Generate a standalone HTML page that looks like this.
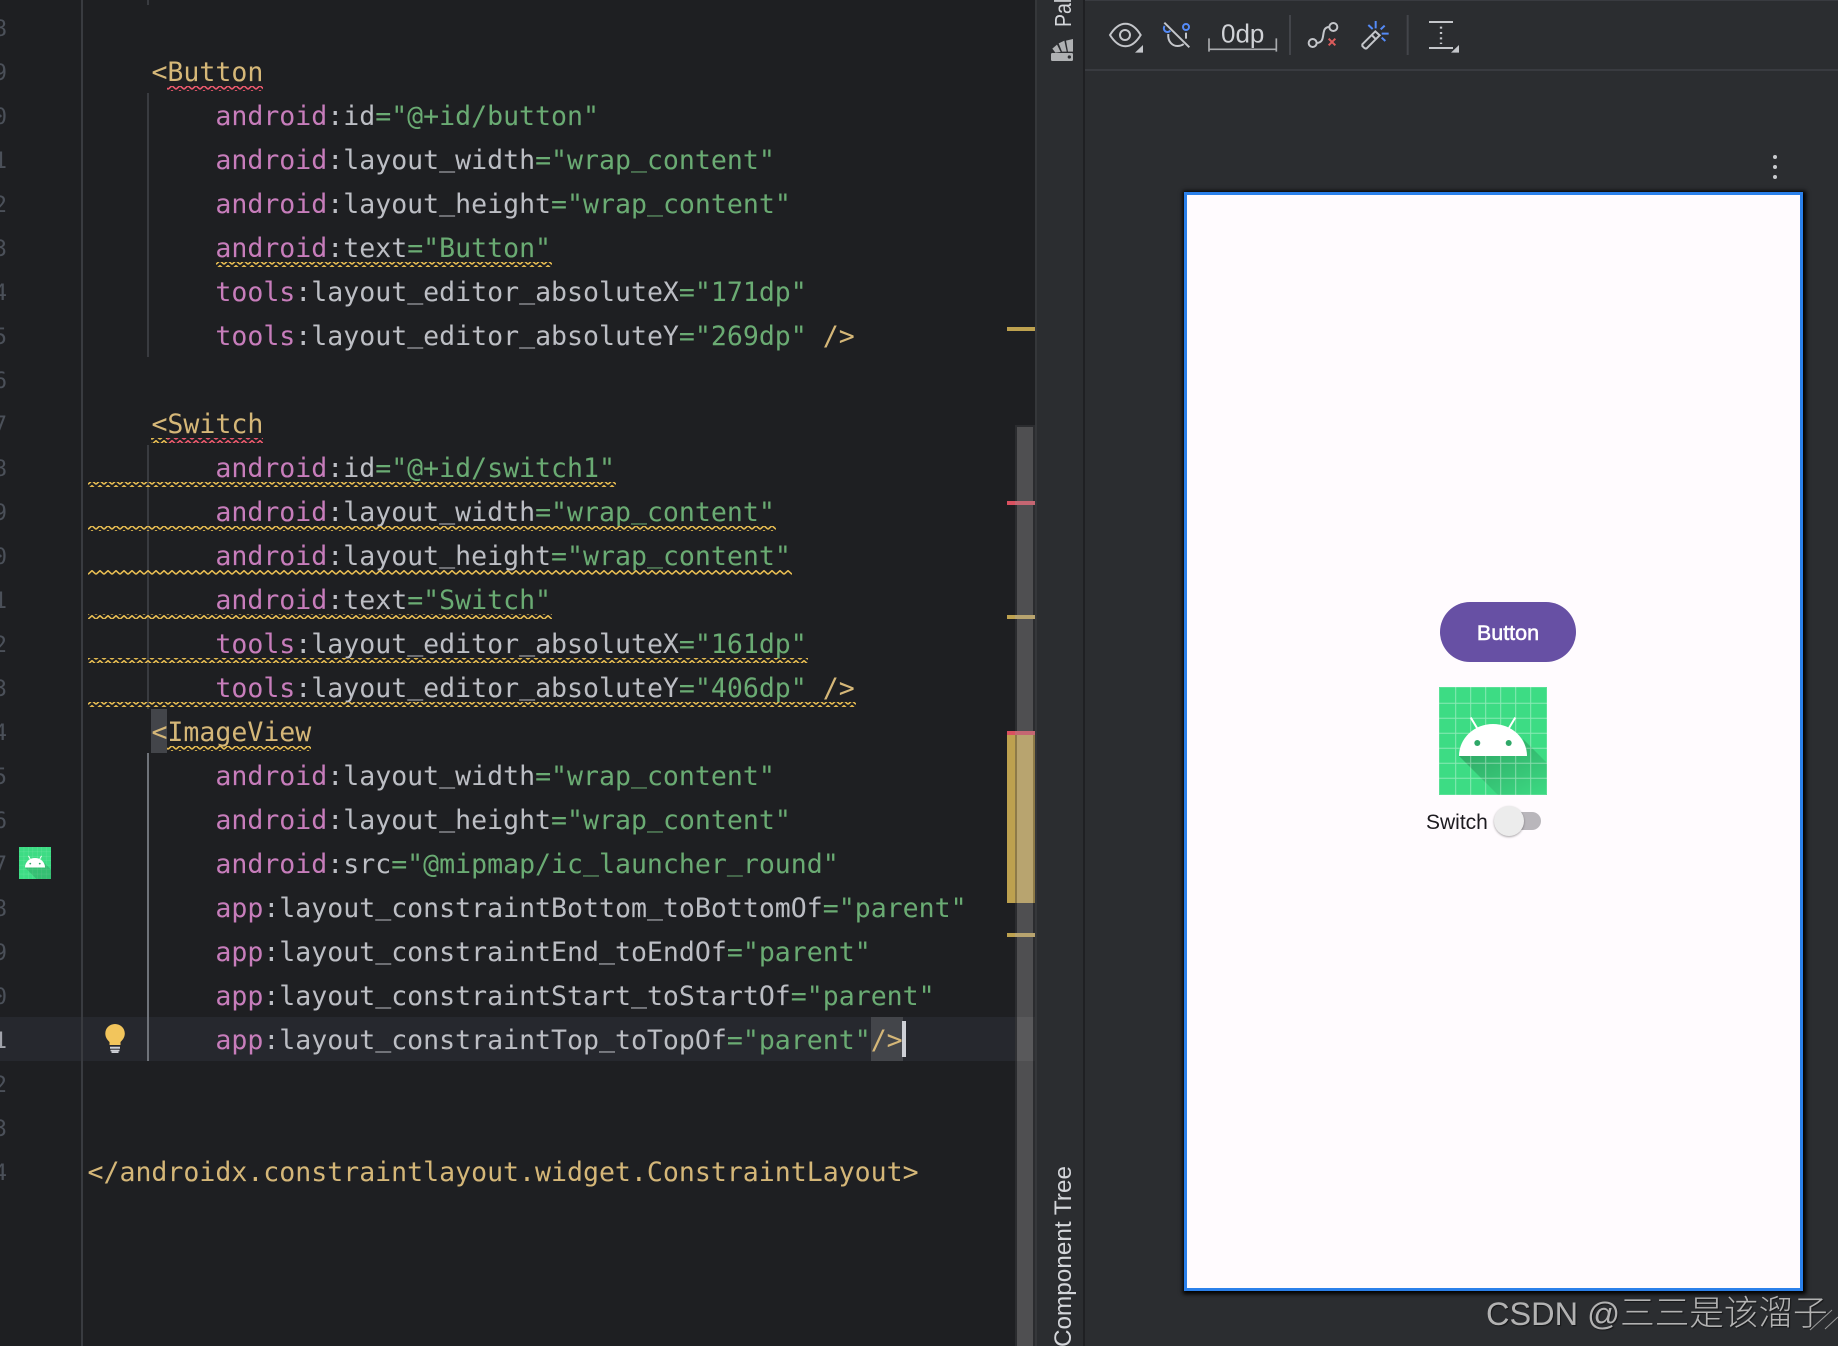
<!DOCTYPE html>
<html><head><meta charset="utf-8"><title>Layout editor</title>
<style>
html,body{margin:0;padding:0;background:#1e1f22}
#r{position:relative;width:1838px;height:1346px;overflow:hidden;background:#1e1f22}
#r div,#r svg{position:absolute}
.l{left:87.5px;margin-top:2px;height:44px;line-height:44px;white-space:pre;font-family:"DejaVu Sans Mono","Liberation Mono",monospace;font-size:26.56px;color:#bcbec4}
.t{color:#d5b778}.n{color:#c77dbb}.v{color:#6aab73}
i{font-style:normal;position:relative;top:-3px}
.g{left:-9px;margin-top:2px;width:16px;height:44px;line-height:44px;text-align:right;font-family:"DejaVu Sans Mono",monospace;font-size:22.5px;color:#4b5059}
</style></head><body><div id="r">

<div style="left:0;top:1017px;width:1035px;height:44px;background:#26282e"></div>
<div style="left:81px;top:0;width:2px;height:1346px;background:#393b40"></div>
<div style="left:147px;top:0;width:2px;height:5px;background:#393b40"></div>
<div style="left:147px;top:93px;width:2px;height:264px;background:#393b40"></div>
<div style="left:147px;top:445px;width:2px;height:264px;background:#393b40"></div>
<div style="left:147px;top:753px;width:2px;height:308px;background:#6f737a"></div>
<div style="left:151px;top:709px;width:16px;height:44px;background:#43454a"></div>
<div style="left:871px;top:1017px;width:32px;height:44px;background:#43454a"></div>

<div class="g" style="top:5px">8</div>
<div class="g" style="top:49px">9</div>
<div class="g" style="top:93px">0</div>
<div class="g" style="top:137px">1</div>
<div class="g" style="top:181px">2</div>
<div class="g" style="top:225px">3</div>
<div class="g" style="top:269px">4</div>
<div class="g" style="top:313px">5</div>
<div class="g" style="top:357px">6</div>
<div class="g" style="top:401px">7</div>
<div class="g" style="top:445px">8</div>
<div class="g" style="top:489px">9</div>
<div class="g" style="top:533px">0</div>
<div class="g" style="top:577px">1</div>
<div class="g" style="top:621px">2</div>
<div class="g" style="top:665px">3</div>
<div class="g" style="top:709px">4</div>
<div class="g" style="top:753px">5</div>
<div class="g" style="top:797px">6</div>
<div class="g" style="top:841px">7</div>
<div class="g" style="top:885px">8</div>
<div class="g" style="top:929px">9</div>
<div class="g" style="top:973px">0</div>
<div class="g" style="top:1017px;color:#a1a3ab">1</div>
<div class="g" style="top:1061px">2</div>
<div class="g" style="top:1105px">3</div>
<div class="g" style="top:1149px">4</div>

<div class="l" style="top:49px">    <span class="t">&lt;Button</span></div>
<div class="l" style="top:93px">        <span class="n">android</span>:id<span class="v">="@+id/button"</span></div>
<div class="l" style="top:137px">        <span class="n">android</span>:layout<i>_</i>width<span class="v">="wrap<i>_</i>content"</span></div>
<div class="l" style="top:181px">        <span class="n">android</span>:layout<i>_</i>height<span class="v">="wrap<i>_</i>content"</span></div>
<div class="l" style="top:225px">        <span class="n">android</span>:text<span class="v">="Button"</span></div>
<div class="l" style="top:269px">        <span class="n">tools</span>:layout<i>_</i>editor<i>_</i>absoluteX<span class="v">="171dp"</span></div>
<div class="l" style="top:313px">        <span class="n">tools</span>:layout<i>_</i>editor<i>_</i>absoluteY<span class="v">="269dp"</span> <span class="t">/&gt;</span></div>
<div class="l" style="top:401px">    <span class="t">&lt;Switch</span></div>
<div class="l" style="top:445px">        <span class="n">android</span>:id<span class="v">="@+id/switch1"</span></div>
<div class="l" style="top:489px">        <span class="n">android</span>:layout<i>_</i>width<span class="v">="wrap<i>_</i>content"</span></div>
<div class="l" style="top:533px">        <span class="n">android</span>:layout<i>_</i>height<span class="v">="wrap<i>_</i>content"</span></div>
<div class="l" style="top:577px">        <span class="n">android</span>:text<span class="v">="Switch"</span></div>
<div class="l" style="top:621px">        <span class="n">tools</span>:layout<i>_</i>editor<i>_</i>absoluteX<span class="v">="161dp"</span></div>
<div class="l" style="top:665px">        <span class="n">tools</span>:layout<i>_</i>editor<i>_</i>absoluteY<span class="v">="406dp"</span> <span class="t">/&gt;</span></div>
<div class="l" style="top:709px">    <span class="t">&lt;ImageView</span></div>
<div class="l" style="top:753px">        <span class="n">android</span>:layout<i>_</i>width<span class="v">="wrap<i>_</i>content"</span></div>
<div class="l" style="top:797px">        <span class="n">android</span>:layout<i>_</i>height<span class="v">="wrap<i>_</i>content"</span></div>
<div class="l" style="top:841px">        <span class="n">android</span>:src<span class="v">="@mipmap/ic<i>_</i>launcher<i>_</i>round"</span></div>
<div class="l" style="top:885px">        <span class="n">app</span>:layout<i>_</i>constraintBottom<i>_</i>toBottomOf<span class="v">="parent"</span></div>
<div class="l" style="top:929px">        <span class="n">app</span>:layout<i>_</i>constraintEnd<i>_</i>toEndOf<span class="v">="parent"</span></div>
<div class="l" style="top:973px">        <span class="n">app</span>:layout<i>_</i>constraintStart<i>_</i>toStartOf<span class="v">="parent"</span></div>
<div class="l" style="top:1017px">        <span class="n">app</span>:layout<i>_</i>constraintTop<i>_</i>toTopOf<span class="v">="parent"</span><span class="t">/&gt;</span></div>
<div class="l" style="top:1149px"><span class="t">&lt;/androidx.constraintlayout.widget.ConstraintLayout&gt;</span></div>

<div style="left:902px;top:1021px;width:4px;height:36px;background:#ced0d6"></div>

<svg style="left:0;top:0" width="1035" height="760" viewBox="0 0 1035 760">
<defs>
<pattern id="wy" width="8" height="5" patternUnits="userSpaceOnUse"><path d="M0 4.300 L4 .7 L8 4.300" fill="none" stroke="#e8bd52" stroke-width="1.6"/></pattern>
<pattern id="wr" width="8" height="5" patternUnits="userSpaceOnUse"><path d="M0 4.300 L4 .7 L8 4.300" fill="none" stroke="#ee5a6e" stroke-width="1.6"/></pattern>
</defs>
<rect x="167" y="86" width="96" height="5" fill="url(#wr)"/>
<rect x="216" y="262" width="336" height="5" fill="url(#wy)"/>
<rect x="151" y="438" width="16" height="5" fill="url(#wy)"/>
<rect x="167" y="438" width="96" height="5" fill="url(#wr)"/>
<rect x="88" y="482" width="528" height="5" fill="url(#wy)"/>
<rect x="88" y="526" width="688" height="5" fill="url(#wy)"/>
<rect x="88" y="570" width="704" height="5" fill="url(#wy)"/>
<rect x="88" y="614" width="464" height="5" fill="url(#wy)"/>
<rect x="88" y="658" width="720" height="5" fill="url(#wy)"/>
<rect x="88" y="702" width="768" height="5" fill="url(#wy)"/>
<rect x="167" y="746" width="144" height="5" fill="url(#wy)"/>
</svg>

<svg style="left:19px;top:847px" width="32" height="32" viewBox="0 0 108 108">
<rect width="108" height="108" fill="#3ddc84"/>
<path d="M16.700 0V108M31.700 0V108M46.700 0V108M61.700 0V108M76.700 0V108M91.700 0V108M0 16.300H108M0 31.300H108M0 46.300H108M0 61.300H108M0 76.300H108M0 91.300H108" stroke="#fff" stroke-opacity=".18" stroke-width="1.500"/>
<path d="M20 69 L59 108 L108 108 L108 76 L84 52 L88 69Z" fill="#000" opacity=".13"/>
<path d="M20 69 A34 32 0 0 1 88 69Z" fill="#fff"/>
<path d="M32 30 L38 41 M76 30 L70 41" stroke="#fff" stroke-width="3"/>
<circle cx="38" cy="56" r="3" fill="#2fa868"/><circle cx="70" cy="56" r="3" fill="#2fa868"/>
</svg>

<svg style="left:100px;top:1020px" width="32" height="36" viewBox="0 0 32 36">
<path d="M15 4 C9.500 4 5.300 8.200 5.300 13.500 C5.300 17.500 7.500 20 9.500 22 L9.500 25 L20.500 25 L20.500 22 C22.500 20 24.800 17.500 24.800 13.500 C24.800 8.200 20.500 4 15 4Z" fill="#f2c55c"/>
<rect x="10" y="26.700" width="10" height="2" fill="#ced0d6"/><rect x="10.500" y="29.700" width="9" height="1.600" fill="#ced0d6"/><rect x="11.500" y="31.200" width="7" height="1.800" fill="#ced0d6"/>
</svg>

<!-- scrollbar and markers -->
<div style="left:1015px;top:425px;width:20px;height:921px;background:#2b2c2f"></div>
<div style="left:1017px;top:427px;width:16px;height:919px;background:#4f4f51"></div>
<div style="left:1015px;top:1017px;width:20px;height:44px;background:#303134"></div>
<div style="left:1017px;top:1017px;width:16px;height:44px;background:#59595b"></div>
<div style="left:1007px;top:327px;width:28px;height:4px;background:#bda14f"></div>
<div style="left:1007px;top:501px;width:8px;height:4px;background:#d9505f"></div>
<div style="left:1015px;top:501px;width:20px;height:4px;background:#c56672"></div>
<div style="left:1007px;top:615px;width:8px;height:4px;background:#bda14f"></div>
<div style="left:1015px;top:615px;width:20px;height:4px;background:#b8a46f"></div>
<div style="left:1007px;top:731px;width:8px;height:4px;background:#d9505f"></div>
<div style="left:1015px;top:731px;width:20px;height:4px;background:#c56672"></div>
<div style="left:1007px;top:735px;width:8px;height:168px;background:#bda14f"></div>
<div style="left:1015px;top:735px;width:2px;height:168px;background:#8d7a48"></div>
<div style="left:1017px;top:735px;width:16px;height:168px;background:#b8a46f"></div>
<div style="left:1033px;top:735px;width:2px;height:168px;background:#8d7a48"></div>
<div style="left:1007px;top:933px;width:8px;height:4px;background:#bda14f"></div>
<div style="left:1015px;top:933px;width:20px;height:4px;background:#b8a46f"></div>

<!-- side panels -->
<div style="left:1035px;top:0;width:803px;height:1346px;background:#2b2d30"></div>
<div style="left:1035px;top:0;width:2px;height:1346px;background:#35373a"></div>
<div style="left:1083px;top:0;width:2px;height:1346px;background:#1f2023"></div>
<div style="left:1085px;top:0;width:753px;height:1px;background:#393b40"></div>
<div style="left:1085px;top:69px;width:753px;height:2px;background:#393b40"></div>

<div style="left:1071px;top:27px;height:0;width:0;white-space:nowrap;font:19.5px/1 'Liberation Sans',sans-serif;color:#d4d6da;transform:rotate(-90deg) scale(1,1.200);transform-origin:0 0"><span style="position:absolute;left:0;bottom:-4px">Palette</span></div>
<div style="left:1071px;top:1347px;height:0;width:0;white-space:nowrap;font:24.3px/1 'Liberation Sans',sans-serif;color:#d4d6da;transform:rotate(-90deg);transform-origin:0 0"><span style="position:absolute;left:0;bottom:-5px">Component Tree</span></div>

<!-- toolbar icons -->
<svg style="left:980px;top:0" width="520" height="70" viewBox="0 0 1560 210" fill="none" stroke-width="6">
<path d="M258 122 L279 117 L279 155 L264 155Z" fill="#afb1b3"/>
<path d="M236 130 L253 122 L260 155 L246 155Z" fill="#afb1b3"/>
<path d="M217 146 L231 134 L242 156 L226 158Z" fill="#afb1b3"/>
<rect x="213" y="159" width="66" height="24" rx="4" fill="#afb1b3"/>
<circle cx="268" cy="171" r="5" fill="#2b2d30"/>

<path d="M390 105 C418 60 455 60 482 105 C455 150 418 150 390 105Z" stroke="#c4c6ca"/>
<circle cx="435" cy="105" r="15" stroke="#c4c6ca"/>
<path d="M465 158 L489 158 L489 135Z" fill="#c4c6ca"/>

<path d="M553 68 L628 142" stroke="#c4c6ca"/>
<path d="M565 102 C562 125 578 138 592 138 C600 138 606 136 611 132" stroke="#c4c6ca"/>
<path d="M618 98 L618 116" stroke="#c4c6ca"/>
<circle cx="618" cy="81" r="9" stroke="#548af7"/>
<path d="M554 78 A9 9 0 0 0 571 92" stroke="#548af7"/>

<path d="M687 115 L687 155 M889 115 L889 155" stroke="#a9abae" stroke-width="5"/>
<path d="M687 148 L889 148" stroke="#a9abae" stroke-width="5"/>
<text x="723" y="127" font-family="'Liberation Sans',sans-serif" font-size="78" fill="#d0d2d6" stroke="none">0dp</text>

<path d="M930 45 L930 165 M1283 45 L1283 165" stroke="#43454a"/>

<circle cx="998" cy="129" r="12" stroke="#c4c6ca"/>
<circle cx="1060" cy="81" r="12" stroke="#c4c6ca"/>
<path d="M1010 129 C1042 129 1018 81 1048 81" stroke="#c4c6ca"/>
<path d="M1046 116 L1066 136 M1066 116 L1046 136" stroke="#db5c5c"/>

<path d="M1147 133 L1186 94 L1199 106 L1160 145 Q1156 147 1152 143 L1147 138Z" stroke="#c4c6ca"/>
<path d="M1175 105 L1188 118" stroke="#c4c6ca"/>
<path d="M1187 63 L1187 85 M1165 75 L1178 87 M1214 77 L1202 88 M1205 101 L1226 101 M1205 113 L1216 123" stroke="#548af7"/>

<path d="M1347 66 L1419 66 M1347 144 L1419 144" stroke="#c4c6ca"/>
<path d="M1383 80 L1383 132" stroke="#c4c6ca" stroke-width="7" stroke-dasharray="6 10"/>
<path d="M1413 158 L1437 158 L1437 135Z" fill="#c4c6ca"/>
</svg>

<!-- menu dots -->
<div style="left:1773px;top:155px;width:4px;height:4px;border-radius:2px;background:#c8cacd"></div>
<div style="left:1773px;top:165px;width:4px;height:4px;border-radius:2px;background:#c8cacd"></div>
<div style="left:1773px;top:175px;width:4px;height:4px;border-radius:2px;background:#c8cacd"></div>

<!-- device preview -->
<div style="left:1184px;top:192px;width:613px;height:1093px;background:#fffbfe;border:3px solid #2b80ea;box-shadow:1px 1px 4px 2px #000"></div>
<div style="left:1440px;top:602px;width:136px;height:60px;border-radius:30px;background:#6750a4;color:#fff;text-align:center;font:21.500px/62px 'Liberation Sans',sans-serif;-webkit-text-stroke:.5px #fff">Button</div>

<svg style="left:1439px;top:687px" width="108" height="108" viewBox="0 0 108 108">
<defs><linearGradient id="sh" x1="0.1" y1="0" x2="0.9" y2="1"><stop offset="0" stop-color="#000" stop-opacity=".26"/><stop offset="1" stop-color="#000" stop-opacity=".02"/></linearGradient></defs>
<rect width="108" height="108" fill="#3ddc84"/>
<path d="M20 69 L59 108 L108 108 L108 76 L84 52 L88 69Z" fill="url(#sh)"/>
<path d="M16.700 0V108M31.700 0V108M46.700 0V108M61.700 0V108M76.700 0V108M91.700 0V108M0 16.300H108M0 31.300H108M0 46.300H108M0 61.300H108M0 76.300H108M0 91.300H108" stroke="#fff" stroke-opacity=".4" stroke-width="1"/>
<rect x=".5" y=".5" width="107" height="107" fill="none" stroke="#fff" stroke-opacity=".15"/>
<path d="M20 69 A34 32 0 0 1 88 69Z" fill="#fff"/>
<path d="M31.700 30.500 L38.300 41.500 M76.300 30.500 L69.700 41.500" stroke="#fff" stroke-width="2"/>
<circle cx="38.300" cy="56" r="3" fill="#2fa868"/><circle cx="69.700" cy="56" r="3" fill="#2fa868"/>
</svg>

<div style="left:1426px;top:810px;font:21px/26px 'Liberation Sans',sans-serif;color:#1d1b20;white-space:nowrap">Switch</div>
<div style="left:1505px;top:812px;width:36px;height:18px;border-radius:9px;background:#b9b6bb"></div>
<div style="left:1494px;top:806px;width:30px;height:30px;border-radius:15px;background:#ececec;box-shadow:0 1px 2px rgba(0,0,0,.35)"></div>

<!-- watermark -->
<div style="left:1486px;top:1292px;white-space:nowrap;font-family:'Liberation Sans','Noto Sans CJK SC',sans-serif;font-size:32.5px;line-height:44px;color:#b2b2b2;text-shadow:1px 1px 1px rgba(0,0,0,.5)">CSDN @<span style="font-size:34.6px;font-weight:300">三三是该溜子</span></div>
<svg style="left:1800px;top:1305px" width="38" height="41" viewBox="0 0 38 41">
<path d="M10 25 L32 5 M25 24 L38 12" stroke="#9a9a9a" stroke-width="1" fill="none"/>
</svg>

</div></body></html>
